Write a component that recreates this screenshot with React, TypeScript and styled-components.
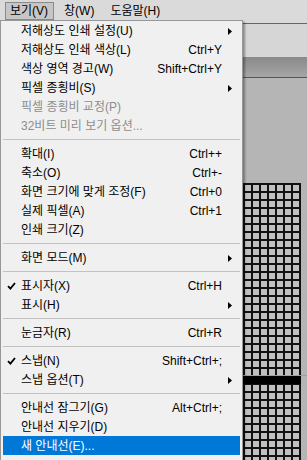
import React from "react";
import styled, { createGlobalStyle } from "styled-components";

const GlobalStyle = createGlobalStyle`
  html, body {
    margin: 0;
    padding: 0;
  }
  body {
    width: 307px;
    height: 460px;
    overflow: hidden;
    background: #b6b6b6;
    font-family: "Liberation Sans", "Noto Sans CJK KR", sans-serif;
    font-size: 12px;
  }
`;

type Entry =
    | { kind: "sep" }
    | {
          kind: "item";
          label: string;
          shortcut?: string;
          submenu?: boolean;
          checked?: boolean;
          disabled?: boolean;
          active?: boolean;
      };

const entries: Entry[] = [
    { kind: "item", label: "저해상도 인쇄 설정(U)", submenu: true },
    { kind: "item", label: "저해상도 인쇄 색상(L)", shortcut: "Ctrl+Y" },
    { kind: "item", label: "색상 영역 경고(W)", shortcut: "Shift+Ctrl+Y" },
    { kind: "item", label: "픽셀 종횡비(S)", submenu: true },
    { kind: "item", label: "픽셀 종횡비 교정(P)", disabled: true },
    { kind: "item", label: "32비트 미리 보기 옵션...", disabled: true },
    { kind: "sep" },
    { kind: "item", label: "확대(I)", shortcut: "Ctrl++" },
    { kind: "item", label: "축소(O)", shortcut: "Ctrl+-" },
    { kind: "item", label: "화면 크기에 맞게 조정(F)", shortcut: "Ctrl+0" },
    { kind: "item", label: "실제 픽셀(A)", shortcut: "Ctrl+1" },
    { kind: "item", label: "인쇄 크기(Z)" },
    { kind: "sep" },
    { kind: "item", label: "화면 모드(M)", submenu: true },
    { kind: "sep" },
    { kind: "item", label: "표시자(X)", shortcut: "Ctrl+H", checked: true },
    { kind: "item", label: "표시(H)", submenu: true },
    { kind: "sep" },
    { kind: "item", label: "눈금자(R)", shortcut: "Ctrl+R" },
    { kind: "sep" },
    { kind: "item", label: "스냅(N)", shortcut: "Shift+Ctrl+;", checked: true },
    { kind: "item", label: "스냅 옵션(T)", submenu: true },
    { kind: "sep" },
    { kind: "item", label: "안내선 잠그기(G)", shortcut: "Alt+Ctrl+;" },
    { kind: "item", label: "안내선 지우기(D)" },
    { kind: "item", label: "새 안내선(E)...", active: true },
];

const CheckIcon = () => (
    <svg width="9" height="8" viewBox="0 0 9 8">
        <path d="M1 4.2 L3.4 6.6 L8 1" fill="none" stroke="#000" strokeWidth="1.8" />
    </svg>
);

const ArrowIcon = () => (
    <svg width="4" height="7" viewBox="0 0 4 7">
        <polygon points="0,0 4,3.5 0,7" fill="#000" />
    </svg>
);

export default function App() {
    return (
        <Window>
            <GlobalStyle />
            <MenuBar>
                <MenuTitle active>보기(V)</MenuTitle>
                <MenuTitle>창(W)</MenuTitle>
                <MenuTitle>도움말(H)</MenuTitle>
            </MenuBar>
            <OptionsBar />
            <TabStrip />
            <Workspace>
                <Document>
                    <SelectionBar />
                </Document>
                <Guide />
            </Workspace>

            <DropMenu>
                {entries.map((e, i) =>
                    e.kind === "sep" ? (
                        <Separator key={i} />
                    ) : (
                        <Item key={i} disabled={e.disabled} active={e.active}>
                            <CheckCell>{e.checked && <CheckIcon />}</CheckCell>
                            <Label>{e.label}</Label>
                            <Shortcut>{e.shortcut}</Shortcut>
                            <ArrowCell>{e.submenu && <ArrowIcon />}</ArrowCell>
                        </Item>
                    )
                )}
            </DropMenu>
        </Window>
    );
}

const Window = styled.div`
    position: relative;
    width: 307px;
    height: 460px;
    overflow: hidden;
    display: flex;
    flex-direction: column;
    background: #b6b6b6;
`;

const MenuBar = styled.div`
    height: 24px;
    box-sizing: border-box;
    display: flex;
    align-items: flex-start;
    padding: 2px 0 0 5px;
    gap: 5px;
    background: #dadada;
    border-bottom: 1px solid #666;
    flex-shrink: 0;
`;

const MenuTitle: any = styled.div`
    height: 18px;
    box-sizing: border-box;
    padding: 0 5px 0 4px;
    line-height: 16px;
    color: #000;
    border: 1px solid ${(p: any) => (p.active ? "#8a8a8a" : "transparent")};
    background: ${(p: any) => (p.active ? "#c6c6c6" : "transparent")};
`;

const OptionsBar = styled.div`
    height: 33px;
    flex-shrink: 0;
    background: #d6d6d6;
`;

const TabStrip = styled.div`
    height: 21px;
    box-sizing: border-box;
    flex-shrink: 0;
    background: linear-gradient(#8a8a8a, #9a9a9a 60%, #a6a6a6);
    border-bottom: 1px solid #555;
`;

const Workspace = styled.div`
    position: relative;
    flex: 1;
    display: flex;
    justify-content: flex-end;
    align-items: flex-start;
    padding: 105px 6px 0 0;
    background: #b5b5b5;
`;

const Document = styled.div`
    position: relative;
    width: 242px;
    height: 300px;
    background-color: #c0c0c0;
    background-image: linear-gradient(90deg, #111 2px, transparent 2px),
        linear-gradient(#111 2px, transparent 2px);
    background-size: 8px 8px;
    background-position: 0 0;
`;

const SelectionBar = styled.div`
    position: absolute;
    left: 0;
    right: 0;
    top: 193px;
    height: 8px;
    background: #000;
`;

const Guide = styled.div`
    position: absolute;
    left: 0;
    right: 0;
    top: 297px;
    height: 1px;
    background: #74b0ae;
`;

const DropMenu = styled.div`
    position: absolute;
    left: 0;
    top: 20px;
    width: 243px;
    height: 460px;
    box-sizing: border-box;
    padding: 0 2px;
    background: #f0f0f0;
    border: 1px solid #979797;
    box-shadow: 2px 2px 2px rgba(0, 0, 0, 0.35);
`;

const Item: any = styled.div`
    height: 19px;
    box-sizing: border-box;
    padding-top: 1px;
    display: grid;
    grid-template-columns: 18px 1fr auto 18px;
    align-items: center;
    color: ${(p: any) => (p.active ? "#fff" : p.disabled ? "#8d8d8d" : "#000")};
    background: ${(p: any) => (p.active ? "#0078d7" : "transparent")};
    white-space: nowrap;
`;

const CheckCell = styled.div`
    display: flex;
    align-items: center;
    justify-content: flex-start;
    padding-left: 4px;
`;

const Label = styled.span`
    line-height: 18px;
`;

const Shortcut = styled.span`
    line-height: 18px;
    text-align: right;
`;

const ArrowCell = styled.div`
    display: flex;
    align-items: center;
    padding-left: 6px;
`;

const Separator = styled.div`
    height: 9px;
    display: flex;
    align-items: center;
    &::before {
        content: "";
        flex: 1;
        height: 1px;
        background: #c2c2c2;
    }
`;
